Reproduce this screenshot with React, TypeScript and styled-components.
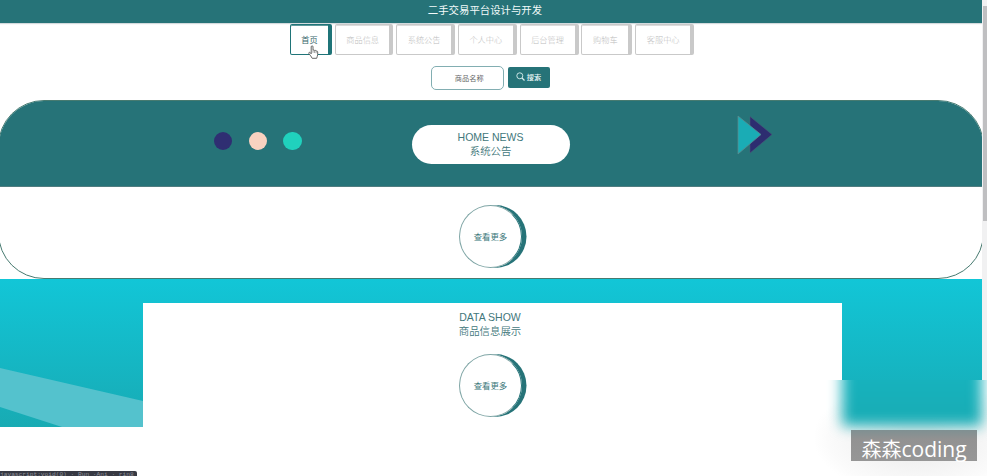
import React from 'react';
import styled, { createGlobalStyle } from 'styled-components';

const teal = '#267378';

const Global = createGlobalStyle`
  * { box-sizing: border-box; }
  html, body { margin: 0; padding: 0; background: #fff; overflow: hidden; }
  body { font-family: "Liberation Sans", "Noto Sans CJK SC", sans-serif; }
`;

const Screen = styled.div`
  position: relative;
  display: flex;
  width: 987px;
  height: 476px;
  overflow: hidden;
  background: #fff;
`;

const Page = styled.main`
  width: 982px;
  height: 476px;
  overflow: hidden;
`;

const TitleBar = styled.header`
  height: 23px;
  background: ${teal};
  color: #f4fbfb;
  font: 400 10.4px/20px "Noto Sans CJK SC", sans-serif;
  text-align: center;
  padding-right: 12px;
  box-shadow: 0 1px 1px #d3dadd;
`;

const Nav = styled.nav`
  display: flex;
  gap: 2.8px;
  height: 32px;
  margin: 1px 0 0 290px;
`;

const NavItem = styled.a<{ $w: number; $active?: boolean }>`
  position: relative;
  width: ${p => p.$w}px;
  height: 31px;
  border: solid ${p => (p.$active ? '#1f7478' : '#c9c9c9')};
  border-width: 1px 4px 1px 1px;
  border-radius: 2px;
  color: ${p => (p.$active ? '#37666a' : '#bdbdbd')};
  font: ${p => (p.$active ? 400 : 300)} 8.2px/28px "Noto Sans CJK SC", sans-serif;
  text-align: center;
  white-space: nowrap;
  box-shadow: inset 0 1px 0 ${p => (p.$active ? '#5c989b' : '#dcdcdc')};
`;

const Cursor = styled.svg`
  position: absolute;
  left: 17px;
  top: 20px;
  width: 11px;
  height: 14px;
  z-index: 2;
`;

const SearchRow = styled.div`
  display: flex;
  align-items: flex-start;
  gap: 4px;
  height: 34px;
  margin: 10px 0 0 430.5px;
`;

const SearchField = styled.div`
  width: 73.5px;
  height: 24px;
  border: 1px solid #82aeb2;
  border-radius: 5px;
  color: #666;
  font: 7.2px/23px "Noto Sans CJK SC", sans-serif;
  text-align: center;
  padding-left: 4px;
`;

const SearchButton = styled.button`
  display: flex;
  align-items: center;
  justify-content: center;
  gap: 1.5px;
  width: 41.5px;
  height: 21px;
  margin-top: 0.5px;
  padding: 0 0 1px;
  border: 0;
  border-radius: 2px;
  background: ${teal};
  color: #e8f6f6;
  font: 500 7.2px/20px "Noto Sans CJK SC", sans-serif;
`;

const News = styled.section`
  width: 986px;
  height: 179px;
  margin-left: -2px;
  border: 1px solid #477a70;
  border-radius: 46px;
  overflow: hidden;
`;

const Banner = styled.div`
  display: flex;
  align-items: flex-start;
  height: 86px;
  background: ${teal};
  border-bottom: 1px solid #507d80;
`;

const Dots = styled.div`
  display: flex;
  gap: 16.5px;
  margin: 31px 0 0 215px;
`;

const Dot = styled.span<{ $c: string }>`
  width: 18.2px;
  height: 18.2px;
  border-radius: 50%;
  background: ${p => p.$c};
`;

const Heading = styled.h2`
  margin: 0;
  font-size: 10.5px;
  font-weight: 400;
  line-height: 13px;
  color: #42777b;
  text-align: center;
`;

const HeadingCn = styled.span`
  display: block;
  font: 350 10.4px/14px "Noto Sans CJK SC", sans-serif;
`;

const Pill = styled.div`
  width: 158px;
  height: 39px;
  margin: 24px 0 0 110px;
  padding-top: 6px;
  border-radius: 20px;
  background: #fff;
`;

const Arrows = styled.svg`
  width: 36px;
  height: 40px;
  margin: 14px 0 0 167.5px;
`;

const More = styled.a<{ $top: number; $left: number }>`
  display: block;
  width: 63px;
  height: 63px;
  margin: ${p => p.$top}px 0 0 ${p => p.$left}px;
  border: 1px solid #7fa5a5;
  border-right-color: ${teal};
  border-radius: 50%;
  box-shadow: 4.5px 0 0 ${teal};
  color: #39777a;
  font: 8.4px/61px "Noto Sans CJK SC", sans-serif;
  text-align: center;
`;

const DataShow = styled.section`
  position: relative;
  height: 148px;
  padding: 24px 0 0 143px;
  background: linear-gradient(#12c6d7, #16b2be 72%, #18abb3);
`;

const Beam = styled.svg`
  position: absolute;
  left: 0;
  top: 88px;
  width: 143px;
  height: 60px;
`;

const DataPanel = styled.div`
  width: 699px;
  height: 125px;
  padding-top: 8px;
  background: #fff;
`;

const DataHeading = styled(Heading)`
  padding-right: 5px;
`;

const ScrollTrack = styled.aside`
  width: 5px;
  height: 476px;
  padding-top: 6px;
  background: #f1f1f2;
`;

const ScrollThumb = styled.div`
  height: 215px;
  margin-left: 1px;
  background: #bfbfc1;
`;

const Haze = styled.div`
  position: absolute;
  left: 815px;
  top: 380px;
  width: 172px;
  height: 96px;
  overflow: hidden;
  background: radial-gradient(ellipse at 60% 60%, #ededed 15%, #fbfbfb 62%, #ffffff 72%);
`;

const HazeFill = styled.div`
  width: 140px;
  height: 86px;
  margin: -40px 0 0 27px;
  background: linear-gradient(#15b8c5, #18adb6 85%);
  filter: blur(7px);
`;

const Watermark = styled.div`
  position: absolute;
  left: 851px;
  top: 430px;
  width: 126px;
  height: 31px;
  background: linear-gradient(#7f9092, #929292 30%, #969696);
  color: #fff;
  font: 350 20px/38px "Noto Sans CJK SC", sans-serif;
  text-align: center;
  white-space: nowrap;
`;

const Latin = styled.span`
  font-family: "Open Sans", sans-serif;
  font-weight: 400;
  font-size: 21px;
`;

const StatusTip = styled.div`
  position: absolute;
  left: 0;
  top: 471px;
  width: 137px;
  height: 5px;
  border-radius: 0 2px 0 0;
  background: #373943;
  color: #8f9199;
  font: 6.2px/8px "Liberation Mono", monospace;
  white-space: pre;
`;

const navItems: [string, number][] = [
  ['首页', 42], ['商品信息', 58.7], ['系统公告', 58.7], ['个人中心', 59],
  ['后台管理', 59], ['购物车', 51], ['客服中心', 59],
];

export default function App() {
  return (
    <Screen>
      <Global />
      <Page>
        <TitleBar>二手交易平台设计与开发</TitleBar>
        <Nav>
          {navItems.map(([label, w], i) => (
            <NavItem key={label} $w={w} $active={i === 0}>
              {label}
              {i === 0 && (
                <Cursor viewBox="0 0 11 14">
                  <path
                    d="M3.2 8.8V1.8C3.2.5 5 .5 5 1.8v3.5c.4-.5 1.4-.4 1.6.3.5-.4 1.4-.2 1.5.5.6-.3 1.6 0 1.6.9v2.5c0 1.5-.8 2.2-1 3.8H4.2C3.6 11.5 1.9 10.2.9 8.6.3 7.5 1.6 6.9 2.3 7.7z"
                    fill="#fff" stroke="#555" strokeWidth=".9" strokeLinejoin="round"
                  />
                  <path d="M5 5.5v2.3M6.6 5.8v2.2M8.1 6.3v1.9" stroke="#666" strokeWidth=".6" />
                </Cursor>
              )}
            </NavItem>
          ))}
        </Nav>
        <SearchRow>
          <SearchField>商品名称</SearchField>
          <SearchButton>
            <svg width="9" height="9" viewBox="0 0 9 9" fill="none" stroke="#d9eeee">
              <circle cx="3.8" cy="3.8" r="3" strokeWidth=".9" />
              <path d="M6 6l2.5 2.5" strokeWidth="1.3" />
            </svg>
            搜索
          </SearchButton>
        </SearchRow>
        <News>
          <Banner>
            <Dots>
              <Dot $c="#2f2e72" />
              <Dot $c="#f8d2c0" />
              <Dot $c="#20d1bd" />
            </Dots>
            <Pill>
              <Heading>HOME NEWS<HeadingCn>系统公告</HeadingCn></Heading>
            </Pill>
            <Arrows viewBox="0 0 36 40">
              <path d="M13 1.5L35 19.5 13 38z" fill="#2d2d70" stroke="#515b79" strokeWidth=".5" />
              <path d="M1 1L24 19.5 1 39z" fill="#1aacb5" stroke="#628b8c" strokeWidth=".7" />
            </Arrows>
          </Banner>
          <More $top={18} $left={460}>查看更多</More>
        </News>
        <DataShow>
          <Beam viewBox="0 0 143 60">
            <path d="M0 1L143 34V60H62L0 40z" fill="#54c2cd" />
          </Beam>
          <DataPanel>
            <DataHeading>DATA SHOW<HeadingCn>商品信息展示</HeadingCn></DataHeading>
            <More $top={16} $left={316}>查看更多</More>
          </DataPanel>
        </DataShow>
      </Page>
      <ScrollTrack><ScrollThumb /></ScrollTrack>
      <Haze><HazeFill /></Haze>
      <Watermark>森森<Latin>coding</Latin></Watermark>
      <StatusTip>javascript:void(0) · Run ·Ani · rin8</StatusTip>
    </Screen>
  );
}
